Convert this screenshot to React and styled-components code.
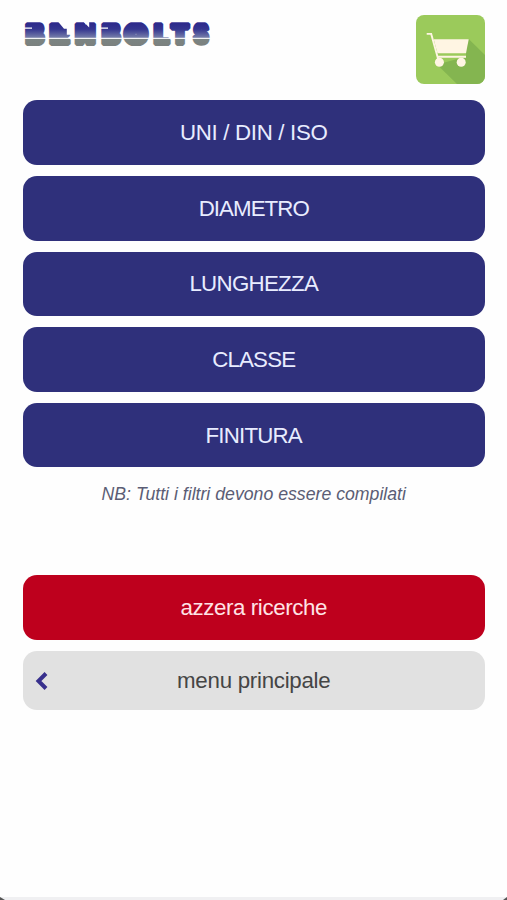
import React from "react";
import styled, { createGlobalStyle } from "styled-components";

const GlobalStyle = createGlobalStyle`
  * {
    box-sizing: border-box;
  }

  body {
    margin: 0;
    background: #fefefe;
    font-family: "Liberation Sans", Arial, sans-serif;
  }
`;

const SPage = styled.div`
  position: relative;
  display: flex;
  flex-direction: column;
  width: 507px;
  height: 900px;
  padding: 15px 22px 0 22.5px;
  overflow: hidden;
`;

const SHeader = styled.header`
  display: flex;
  justify-content: space-between;
  align-items: flex-start;
  height: 85.4px;
`;

const SLogo = styled.svg`
  display: block;
  width: 190px;
  height: 40px;
`;

const SCartButton = styled.button`
  width: 69px;
  height: 68.5px;
  padding: 0;
  border: 0;
  border-radius: 8px;
  background: #9bca5b;
  overflow: hidden;

  svg {
    display: block;
  }
`;

const SStack = styled.div`
  display: flex;
  flex-direction: column;
  gap: 11px;
`;

const SButton = styled.button`
  display: flex;
  align-items: center;
  justify-content: center;
  width: 100%;
  height: ${props => props.$height || 64.6}px;
  padding: 1px 0 0;
  border: 0;
  border-radius: 14px;
  background: ${props => props.$background || "#2f307b"};
  color: ${props => props.$color || "#e8ecff"};
  font-family: inherit;
  font-size: 22.3px;
  letter-spacing: ${props => props.$spacing || 0}px;
`;

const SNote = styled.p`
  height: 107.6px;
  margin: 0;
  padding-top: 16.6px;
  color: #5b5d75;
  font-size: 17.7px;
  font-style: italic;
  line-height: 21px;
  text-align: center;
  white-space: nowrap;
`;

const SBackButton = styled(SButton)`
  display: grid;
  grid-template-columns: 38px 1fr 38px;

  svg {
    justify-self: center;
  }
`;

const SBottomEdge = styled.div`
  position: absolute;
  left: 0;
  right: 0;
  bottom: 0;
  height: 3px;
  background: #f0f0f2;

  &::before,
  &::after {
    content: "";
    position: absolute;
    bottom: 0;
    border-bottom: 3px solid #555;
  }

  &::before {
    left: 0;
    border-right: 5px solid transparent;
  }

  &::after {
    right: 0;
    border-left: 4px solid transparent;
  }
`;

const letters = [
  { char: "B", x: 3.2, width: 17.2 },
  { char: "E", x: 27.4, width: 18.6 },
  { char: "N", x: 53, width: 18.6, stroke: 5.5 },
  { char: "B", x: 79.4, width: 17.2 },
  { char: "O", x: 104.2, width: 17.4, stroke: 9.5, size: 21, y: 27.2 },
  { char: "L", x: 131.5, width: 14.4 },
  { char: "T", x: 148.2, width: 17.4 },
  { char: "S", x: 170.2, width: 15.6, stroke: 3.4, size: 28 }
];

const Logo = () => (
  <SLogo viewBox="0 0 190 40" role="img" aria-label="BENBOLTS">
    <defs>
      <linearGradient
        id="logo"
        gradientUnits="userSpaceOnUse"
        x1="0"
        y1="7"
        x2="0"
        y2="31"
      >
        <stop offset="0" stopColor="#2b278a" />
        <stop offset="0.3" stopColor="#34358f" />
        <stop offset="0.66" stopColor="#7880aa" />
        <stop offset="0.7" stopColor="#7b8482" />
        <stop offset="1" stopColor="#7b817f" />
      </linearGradient>
      <clipPath id="cap">
        <rect x="0" y="7.3" width="190" height="23.7" />
      </clipPath>
    </defs>
    <g
      clipPath="url(#cap)"
      fill="url(#logo)"
      stroke="url(#logo)"
      strokeLinejoin="bevel"
      fontFamily="Inter"
      fontWeight="900"
    >
      {letters.map(({ char, x, width, stroke = 5, size = 26.5, y = 28.8 }) => (
        <text
          key={x}
          x={x}
          y={y}
          fontSize={size}
          strokeWidth={stroke}
          textLength={width}
          lengthAdjust="spacingAndGlyphs"
        >
          {char}
        </text>
      ))}
    </g>
    {/* stencil cuts */}
    <g fill="#fefefe">
      <path d="M0 12.6h9v1.1H0zM76 12.6h9v1.1H76z" />
      <path d="M34.5 6H49v13.7h-5.2v-6H41z" />
      <path d="M60.8 6v1l5.4 5.4V6z" />
      <rect x="0" y="22.8" width="190" height="1.1" />
    </g>
  </SLogo>
);

const Cart = () => (
  <svg width="69" height="69" viewBox="0 0 69 69">
    <path d="M52.7 24 69 40V69H41L21 49.5l26-7z" fill="#84b550" />
    <path d="M21.5 38.2H50V43H23z" fill="#9bca5b" />
    <path d="M17.7 24.3h35L50 38.2H21.5z" fill="#fff5e3" />
    <path
      d="M10.7 18.9H15.2L22.4 45M21.5 41.8H50"
      fill="none"
      stroke="#fff5e3"
      strokeWidth="1.9"
    />
    <circle cx="23.4" cy="47.3" r="4.5" fill="#fff5e3" />
    <circle cx="45.2" cy="47.3" r="4.5" fill="#fff5e3" />
  </svg>
);

const Chevron = () => (
  <svg width="14" height="20" viewBox="0 0 14 20">
    <path
      d="M11 2.5 3.5 10l7.5 7.5"
      fill="none"
      stroke="#38308d"
      strokeWidth="4"
    />
  </svg>
);

const filters = [
  { label: "UNI / DIN / ISO", spacing: -0.32 },
  { label: "DIAMETRO", spacing: -0.95 },
  { label: "LUNGHEZZA", spacing: -0.7 },
  { label: "CLASSE", spacing: -0.8 },
  { label: "FINITURA", spacing: -0.8 }
];

const App = () => (
  <SPage>
    <GlobalStyle />
    <SHeader>
      <Logo />
      <SCartButton aria-label="Carrello">
        <Cart />
      </SCartButton>
    </SHeader>
    <SStack>
      {filters.map(({ label, spacing }) => (
        <SButton key={label} $spacing={spacing}>
          {label}
        </SButton>
      ))}
    </SStack>
    <SNote>NB: Tutti i filtri devono essere compilati</SNote>
    <SStack>
      <SButton $background="#be001d" $color="#ffe3e6" $spacing={-0.4}>
        azzera ricerche
      </SButton>
      <SBackButton
        $background="#e1e1e1"
        $color="#454545"
        $height={59}
        $spacing={-0.27}
      >
        <Chevron />
        <span>menu principale</span>
      </SBackButton>
    </SStack>
    <SBottomEdge />
  </SPage>
);

export default App;
